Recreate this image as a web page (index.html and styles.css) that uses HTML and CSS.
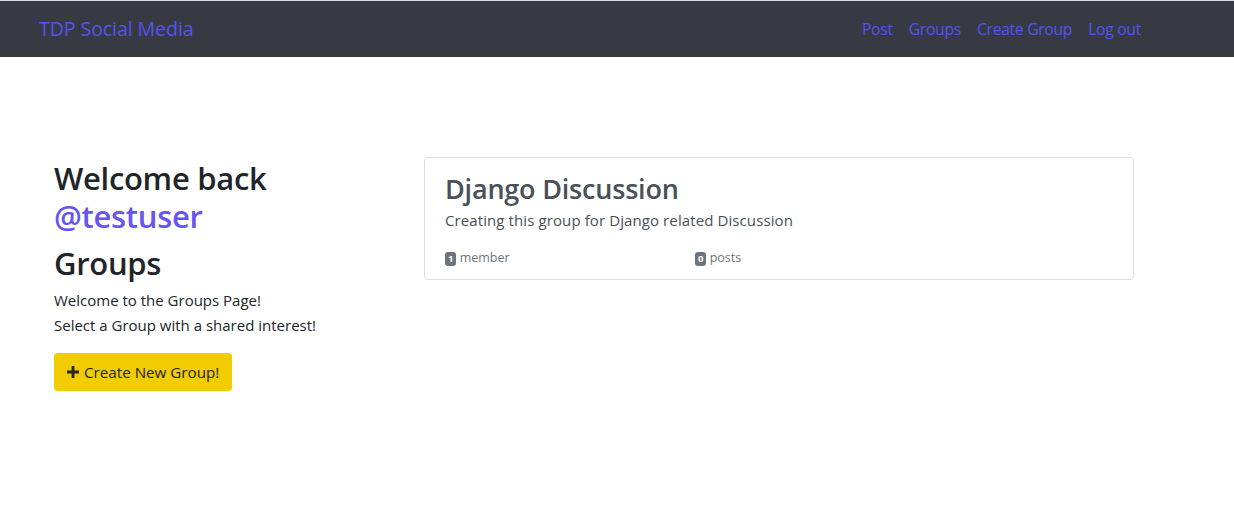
FILE: index.html
```html
<!DOCTYPE html>
<html lang="en">
<head>
<meta charset="utf-8">
<title>Groups</title>
<link rel="stylesheet" href="styles.css">
</head>
<body>
<nav class="navbar">
  <a class="brand" href="#">TDP Social Media</a>
  <ul class="nav-links">
    <li><a href="#">Post</a></li>
    <li><a href="#">Groups</a></li>
    <li><a href="#">Create Group</a></li>
    <li><a href="#">Log out</a></li>
  </ul>
</nav>
<main class="content">
  <aside class="intro">
    <h2 class="heading">Welcome back<br><a class="user" href="#">@testuser</a></h2>
    <h2 class="heading groups-title">Groups</h2>
    <p class="lead-text">Welcome to the Groups Page!<br>Select a Group with a shared interest!</p>
    <a class="btn-create" href="#"><svg class="plus" viewBox="0 0 12 12" width="12" height="12"><path d="M4.6 0h2.8v4.6H12v2.8H7.4V12H4.6V7.4H0V4.6h4.6z" fill="#212529"/></svg>Create New Group!</a>
  </aside>
  <section class="groups">
    <a class="card" href="#">
      <h3 class="card-title">Django Discussion</h3>
      <p class="card-text">Creating this group for Django related Discussion</p>
      <div class="card-meta">
        <span class="meta-item"><span class="badge">1</span> member</span>
        <span class="meta-item"><span class="badge">0</span> posts</span>
      </div>
    </a>
  </section>
</main>
</body>
</html>
```
FILE: styles.css
```css
* { box-sizing: border-box; }
html, body { margin: 0; padding: 0; }
body {
  font-family: "Open Sans", "Noto Sans", "Liberation Sans", sans-serif;
  font-size: 16px;
  line-height: 1.5;
  color: #212529;
  background: #fff;
}
a { text-decoration: none; }

.navbar {
  display: flex;
  align-items: center;
  justify-content: space-between;
  height: 57px;
  background: #373a43;
  border-top: 1px solid #dcdcdc;
  padding: 0 93px 0 39px;
}
.brand {
  color: #5353ef;
  font-size: 19.6px;
  letter-spacing: -0.1px;
}
.nav-links {
  display: flex;
  list-style: none;
  margin: 0;
  padding: 0;
  gap: 16px;
}
.nav-links a {
  color: #5353ef;
  font-size: 15.8px;
  letter-spacing: -0.35px;
}

.content {
  display: flex;
  padding: 102px 0 0 54px;
}
.intro {
  width: 370px;
  flex: none;
}
.heading {
  margin: 0;
  font-size: 31px;
  font-weight: 600;
  line-height: 38px;
  letter-spacing: -0.3px;
}
.user { color: #6655f0; }
.groups-title { margin-top: 9px; }
.lead-text {
  margin: 6px 0 15px;
  font-size: 15px;
  line-height: 25px;
}
.btn-create {
  display: inline-flex;
  align-items: center;
  gap: 5px;
  height: 38px;
  padding: 0 13px 0 13px;
  background: #f0cc00;
  border-radius: 4px;
  color: #212529;
  font-size: 15.2px;
}
.groups {
  width: 710px;
  flex: none;
  margin-top: -2px;
}
.card {
  display: block;
  border: 1px solid #dcdcdc;
  border-radius: 4px;
  padding: 12px 20px 12px 20px;
  color: #495057;
  height: 123px;
}
.card-title {
  margin: 0;
  font-size: 27px;
  font-weight: 600;
  line-height: 37px;
  letter-spacing: -0.2px;
}
.card-text {
  margin: 0;
  padding-top: 1px;
  font-size: 15px;
  line-height: 24px;
  letter-spacing: 0.1px;
}
.card-meta {
  display: flex;
  margin-top: 17px;
  font-size: 12.5px;
  line-height: 18px;
  color: #6c757d;
}
.meta-item { width: 250px; }
.badge {
  display: inline-block;
  background: #6c757d;
  color: #fff;
  font-size: 9.5px;
  font-weight: 700;
  border-radius: 3px;
  padding: 0 3px;
  line-height: 14px;
  vertical-align: 0;
}
```
